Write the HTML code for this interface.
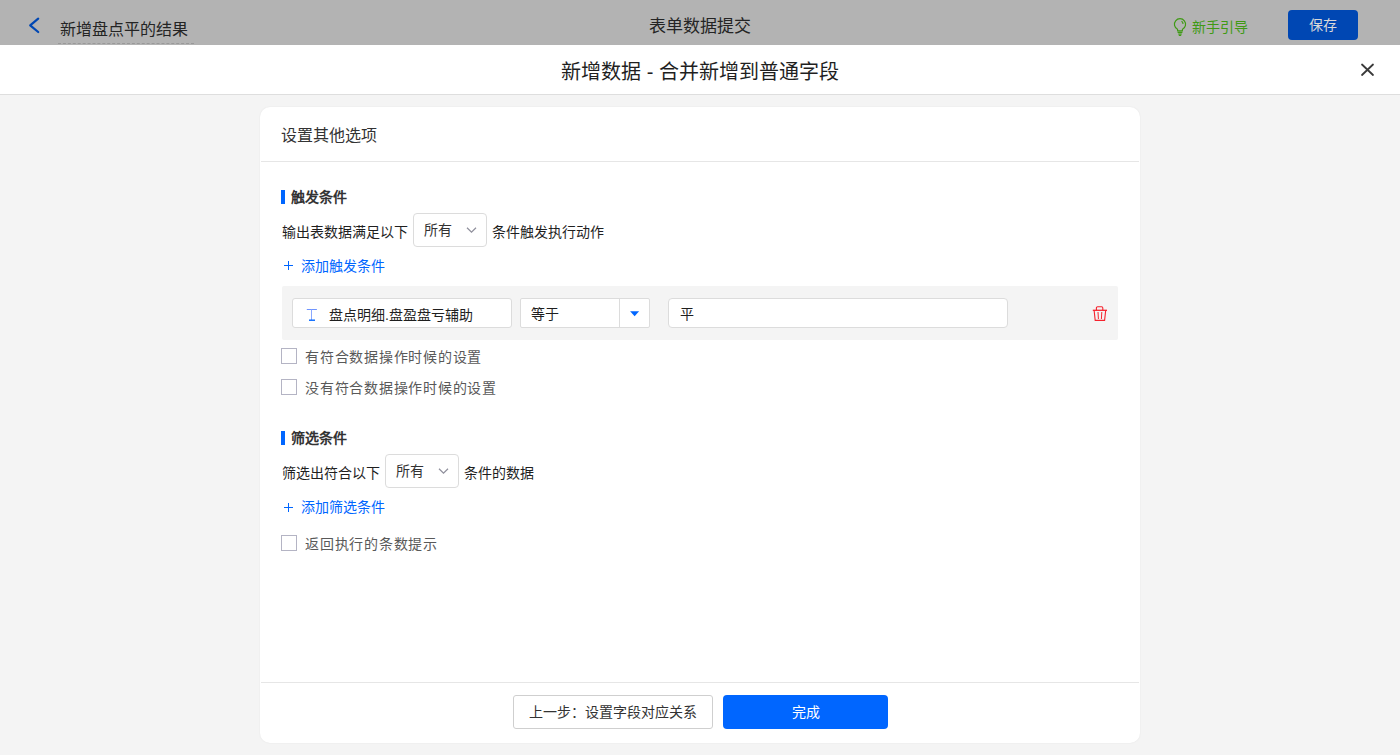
<!DOCTYPE html>
<html lang="zh-CN"><head><meta charset="utf-8">
<style>
*{box-sizing:border-box;margin:0;padding:0}
html,body{width:1400px;height:755px;overflow:hidden;background:#f4f4f4;font-family:"Liberation Sans",sans-serif;color:#1f1f1f}
.abs{position:absolute;white-space:nowrap}
#topbar{position:absolute;left:0;top:0;width:1400px;height:45px;background:#b3b3b3}
#mhead{position:absolute;left:0;top:45px;width:1400px;height:50px;background:#fff;border-bottom:1px solid #dedede}
#card{position:absolute;left:260px;top:107px;width:880px;height:636px;background:#fff;border-radius:10px;box-shadow:0 0 2px rgba(0,0,0,0.07)}
.t{position:absolute;white-space:nowrap;line-height:1}
.bar{position:absolute;width:4px;background:#0066ff}
.sel{position:absolute;background:#fff;border:1px solid #dcdcdc;border-radius:4px}
.cb{position:absolute;width:16px;height:16px;border:1px solid #b4b4c4;background:#fff}
.inp{position:absolute;background:#fff;border:1px solid #dcdcdc;border-radius:3px}
</style></head><body>
<div id="topbar">
  <svg class="abs" style="left:28px;top:17px" width="13" height="17" viewBox="0 0 13 17"><path d="M10.2 1.7 L2.2 8.3 L10.2 15" fill="none" stroke="#0047b3" stroke-width="2.2" stroke-linecap="round" stroke-linejoin="round"/></svg>
  <div class="t" style="left:60px;top:22px;font-size:16px;color:#242424">新增盘点平的结果</div>
  <div class="abs" style="left:58px;top:43px;width:136px;border-top:1px dashed #999"></div>
  <div class="t" style="left:0;width:1400px;text-align:center;top:18px;font-size:17px;color:#242424">表单数据提交</div>
  <svg class="abs" style="left:1172px;top:17px" width="16" height="20" viewBox="0 0 16 20"><path d="M5.5 12.3 A5.6 5.6 0 1 1 10.5 12.3 L10.3 13.8 H5.7 Z" fill="none" stroke="#3f9a14" stroke-width="1.2"/><path d="M9.5 4.3 A2.8 2.8 0 0 1 11 7" fill="none" stroke="#3f9a14" stroke-width="1.1"/><path d="M5.6 15.4h4.8M6.2 17h3.6M6.8 18.4h2.4" stroke="#3f9a14" stroke-width="1.1"/></svg>
  <div class="t" style="left:1192px;top:20px;font-size:14px;color:#3f9a14">新手引导</div>
  <div class="abs" style="left:1288px;top:10px;width:70px;height:30px;background:#0047b3;border-radius:4px;color:#d9d9d9;font-size:14px;line-height:30px;text-align:center">保存</div>
</div>
<div id="mhead">
  <div class="t" style="left:0;width:1400px;text-align:center;top:17px;font-size:20px;color:#1f1f1f">新增数据 - 合并新增到普通字段</div>
  <svg class="abs" style="left:1360px;top:18px" width="15" height="15" viewBox="0 0 15 15"><path d="M2 1.5L13 12M13 1.5L2 12" stroke="#3a3a3a" stroke-width="1.8" stroke-linecap="round"/></svg>
</div>
<div id="card">
  <div class="t" style="left:21px;top:21px;font-size:16px;color:#333">设置其他选项</div>
  <div class="abs" style="left:1px;top:54px;width:878px;border-top:1px solid #e6e6e6"></div>

  <div class="bar" style="left:21px;top:83px;height:14px"></div>
  <div class="t" style="left:31px;top:83px;font-size:14px;font-weight:bold;color:#333">触发条件</div>
  <div class="t" style="left:22px;top:118px;font-size:14px;color:#1f1f1f">输出表数据满足以下</div>
  <div class="sel" style="left:153px;top:106px;width:74px;height:34px"><span class="t" style="left:10px;top:9px;font-size:14px;color:#333">所有</span>
    <svg class="abs" style="left:52px;top:12px" width="12" height="8" viewBox="0 0 12 8"><path d="M1 1.8L5.5 6.2L10 1.8" fill="none" stroke="#8f8f9c" stroke-width="1.2"/></svg></div>
  <div class="t" style="left:232px;top:118px;font-size:14px;color:#1f1f1f">条件触发执行动作</div>
  <svg class="abs" style="left:24px;top:154px" width="10" height="10" viewBox="0 0 10 10"><path d="M4.5 0V9M0 4.5H9" stroke="#0066ff" stroke-width="1"/></svg>
  <div class="t" style="left:41px;top:152px;font-size:14px;color:#0066ff">添加触发条件</div>

  <div class="abs" style="left:22px;top:179px;width:836px;height:54px;background:#f4f4f4;border-radius:2px">
    <div class="inp" style="left:10px;top:12px;width:220px;height:30px">
      <svg class="abs" style="left:13px;top:9px" width="12" height="14" viewBox="0 0 12 14"><path d="M0.8 1.5H10.9" stroke="#6f94ff" stroke-width="1"/><path d="M5.5 1.5V12" stroke="#8aa8ff" stroke-width="1"/><path d="M3 12.2H9" stroke="#0066ff" stroke-width="1.4"/></svg>
      <span class="t" style="left:36px;top:9px;font-size:14px;color:#1f1f1f">盘点明细.盘盈盘亏辅助</span>
    </div>
    <div class="inp" style="left:238px;top:12px;width:130px;height:30px;border-radius:2px">
      <span class="t" style="left:10px;top:8px;font-size:14px;color:#1f1f1f">等于</span>
      <div class="abs" style="left:98px;top:0;height:28px;border-left:1px solid #dcdcdc"></div>
      <svg class="abs" style="left:109px;top:12px" width="11" height="6" viewBox="0 0 11 6"><path d="M0.1 0.2H9.1L4.6 5.3z" fill="#0066ff"/></svg>
    </div>
    <div class="inp" style="left:386px;top:12px;width:340px;height:30px;border-radius:4px">
      <span class="t" style="left:11px;top:8px;font-size:14px;color:#1f1f1f">平</span>
    </div>
    <svg class="abs" style="left:810px;top:126px" width="16" height="17" viewBox="0 0 16 17"></svg>
  </div>
  <svg class="abs" style="left:1092px;top:306px;position:fixed" width="16" height="17" viewBox="0 0 16 17"><path d="M4.4 4.2V1.9A1.2 1.2 0 0 1 5.6 0.7H9.6A1.2 1.2 0 0 1 10.8 1.9V4.2" fill="none" stroke="#f5222d" stroke-width="1.1"/><path d="M0.8 4.3H15" stroke="#f5222d" stroke-width="1.3"/><path d="M2.1 4.3L3.2 14.4H12.6L13.7 4.3" fill="none" stroke="#f5222d" stroke-width="1.1"/><path d="M6.0 6.0L6.4 13M9.8 6.0L9.4 13" stroke="#f5222d" stroke-width="1"/></svg>

  <div class="cb" style="left:21px;top:241px"></div>
  <div class="t" style="left:45px;top:243px;font-size:14px;letter-spacing:0.76px;color:#595959">有符合数据操作时候的设置</div>
  <div class="cb" style="left:21px;top:272px"></div>
  <div class="t" style="left:45px;top:274px;font-size:14px;letter-spacing:0.76px;color:#595959">没有符合数据操作时候的设置</div>

  <div class="bar" style="left:21px;top:324px;height:14px"></div>
  <div class="t" style="left:31px;top:324px;font-size:14px;font-weight:bold;color:#333">筛选条件</div>
  <div class="t" style="left:22px;top:359px;font-size:14px;color:#1f1f1f">筛选出符合以下</div>
  <div class="sel" style="left:125px;top:347px;width:74px;height:34px"><span class="t" style="left:10px;top:9px;font-size:14px;color:#333">所有</span>
    <svg class="abs" style="left:52px;top:12px" width="12" height="8" viewBox="0 0 12 8"><path d="M1 1.8L5.5 6.2L10 1.8" fill="none" stroke="#8f8f9c" stroke-width="1.2"/></svg></div>
  <div class="t" style="left:204px;top:359px;font-size:14px;color:#1f1f1f">条件的数据</div>
  <svg class="abs" style="left:24px;top:396px" width="10" height="10" viewBox="0 0 10 10"><path d="M4.5 0V9M0 4.5H9" stroke="#0066ff" stroke-width="1"/></svg>
  <div class="t" style="left:41px;top:393px;font-size:14px;color:#0066ff">添加筛选条件</div>

  <div class="cb" style="left:21px;top:428px"></div>
  <div class="t" style="left:45px;top:430px;font-size:14px;letter-spacing:0.76px;color:#595959">返回执行的条数提示</div>

  <div class="abs" style="left:1px;top:575px;width:878px;border-top:1px solid #e6e6e6"></div>
  <div class="abs" style="left:253px;top:588px;width:200px;height:34px;border:1px solid #cfcfcf;border-radius:3px;font-size:14px;line-height:32px;text-align:center;color:#333">上一步：设置字段对应关系</div>
  <div class="abs" style="left:463px;top:588px;width:165px;height:34px;background:#0066ff;border-radius:4px;font-size:14px;line-height:34px;text-align:center;color:#fff">完成</div>
</div>
</body></html>
